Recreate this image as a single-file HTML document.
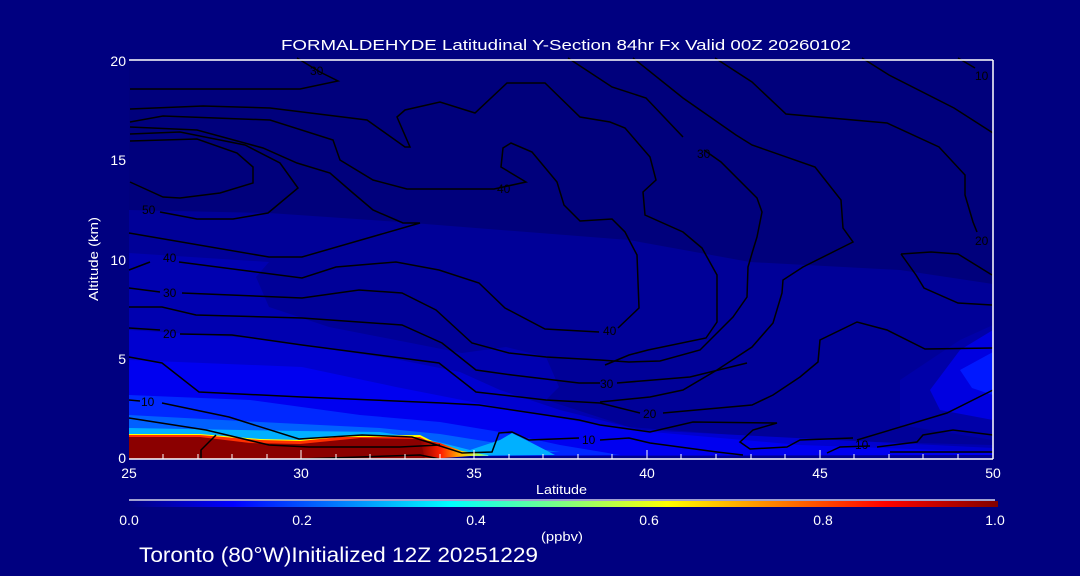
<!DOCTYPE html>
<html><head><meta charset="utf-8"><style>
html,body{margin:0;padding:0;background:#000080;}
body{width:1080px;height:576px;overflow:hidden;position:relative;}
svg{position:absolute;left:0;top:0;}
</style></head><body>
<svg width="1080" height="576" viewBox="0 0 1080 576" xmlns="http://www.w3.org/2000/svg" font-family="Liberation Sans, sans-serif">
<defs>
<linearGradient id="jet" x1="0" x2="1" y1="0" y2="0">
<stop offset="0" stop-color="#000080"/>
<stop offset="0.12" stop-color="#0000ff"/>
<stop offset="0.37" stop-color="#00ffff"/>
<stop offset="0.5" stop-color="#80ff80"/>
<stop offset="0.62" stop-color="#ffff00"/>
<stop offset="0.87" stop-color="#ff0000"/>
<stop offset="1" stop-color="#800000"/>
</linearGradient>
<linearGradient id="edge" x1="0" x2="1" y1="0" y2="0">
<stop offset="0" stop-color="#8b0000"/>
<stop offset="0.3" stop-color="#ff2000"/>
<stop offset="0.6" stop-color="#ffc000"/>
<stop offset="0.85" stop-color="#a0ff60"/>
<stop offset="1" stop-color="#40e0ff"/>
</linearGradient>
</defs>
<rect x="129" y="60" width="864" height="399" fill="#00007c"/>
<polygon fill="#000098" points="129,210 269,213 400,222 629,240 750,262 900,270 993,284 993,459 129,459"/>
<polygon fill="#0000b0" points="129,253 269,262 256,277 269,307 329,327 462,353 506,347 546,357 559,387 546,400 629,427 800,440 993,445 993,459 129,459"/>
<polygon fill="#0000a8" points="900,380 960,340 993,325 993,440 900,425"/>
<polygon fill="#0000d0" points="129,330 250,338 302,345 400,360 460,372 500,390 560,410 640,430 993,448 993,459 129,459"/>
<polygon fill="#0000e0" points="930,390 960,350 993,330 993,420 940,410"/>
<polygon fill="#0018ff" points="960,370 993,352 993,395 972,388"/>
<polygon fill="#0000f0" points="129,360 302,367 396,387 462,400 529,413 629,430 800,445 993,452 993,459 129,459"/>
<polygon fill="#0028ff" points="129,395 250,400 360,415 440,422 500,432 560,445 620,455 129,459"/>
<polygon fill="#0060ff" points="129,415 260,422 380,428 440,434 490,442 560,452 129,459"/>
<polygon fill="#00b0ff" points="129,428 300,431 380,432 430,440 470,450 500,440 512,433 530,442 555,455 129,459"/>
<polygon fill="#ffff00" points="129,434 200,434 260,439 300,440 340,436 420,435 440,445 129,459"/>
<polygon fill="#ff3000" points="129,435 200,435 260,440 300,441 340,437 420,437 440,447 129,459"/>
<polygon fill="#8b0000" points="129,437 200,437 250,443 300,444 360,438 420,439 432,459 129,459"/>
<polygon fill="url(#edge)" points="420,439 440,443 462,451 488,455 490,459 425,459"/>
<polygon fill="#000090" points="430,459 470,456 993,455 993,459"/>
<g fill="none" stroke="#000" stroke-width="1.5">
<polyline points="130,89 300,89 338,81 320,72 297,58"/>
<polyline points="130,109 203,106 270,108 367,120 405,147 410,147 397,117 405,110 440,102 475,113 507,83 545,83 580,117 610,122 625,128 650,157 656,180 643,192 645,215 683,232 702,248 717,275 717,322 706,338 648,350 629,355 605,365"/>
<polyline points="130,122 163,116 270,120 333,140 340,160 373,180 407,189 494,189 526,182 501,167 503,148 511,143 532,152 557,182 564,205 580,221 612,219 625,232 637,255 639,308 618,328"/>
<polyline points="599,332 545,329 505,308 479,283 439,270 396,262 336,267 302,278 179,262"/>
<polyline points="150,262 129,270"/>
<polyline points="130,127 197,130 263,148 297,163 330,173 353,193 373,210 403,223 420,223 302,257 269,257 129,233"/>
<polyline points="130,141 197,139 237,153 253,167 253,183 220,193 180,198 163,197 130,182"/>
<polyline points="160,212 197,219 233,219 268,213 298,188 280,163 245,145 180,132 130,134"/>
<polyline points="129,288 160,292"/><polyline points="182,293 302,298 359,290 402,293 436,310 472,343 509,353 546,357 600,360 629,362 660,361 700,350 733,317 747,297 748,267 753,250 757,237 762,212 757,198 721,162 704,150"/>
<polyline points="683,137 646,98 612,87 568,58"/>
<polyline points="129,307 162,307 196,315 302,318 402,325 442,343 476,370 512,375 579,383 600,383"/>
<polyline points="617,383 690,377 747,363"/>
<polyline points="600,402 650,397 683,390 717,370 752,347 773,323 782,293 783,280 803,267 837,250 853,242 843,228 841,200 815,167 752,145 736,135 683,98 633,58"/>
<polyline points="129,328 160,330"/><polyline points="180,334 232,335 302,345 439,363 476,392 546,400 600,403 640,413"/>
<polyline points="663,413 752,405 773,395 800,377 818,362 820,340 857,322 887,330 925,349 993,348"/>
<polyline points="129,357 162,363 199,392 302,397 442,403 479,405 579,420 600,425 650,432 693,422 777,423 753,430 740,442 750,449 787,447 800,440 853,438"/>
<polyline points="877,447 917,442 923,435 953,430 993,435"/>
<polyline points="129,400 140,401"/><polyline points="162,403 229,417 299,439 362,435 412,437 462,453 492,452 499,433 512,432 529,440 579,438"/>
<polyline points="600,440 629,438 650,443 717,452 743,455"/>
<polyline points="129,418 206,430 269,445 309,447 400,447 440,445"/>
<polyline points="216,435 201,450 201,459"/>
<polyline points="857,440 947,413 993,390"/>
<polyline points="827,453 840,447 870,446"/>
<polyline points="890,452 993,452"/>
<polyline points="715,58 752,82 786,114 887,123 939,147 965,175 965,195 973,222 977,232"/>
<polyline points="862,58 889,75 954,108 993,133"/>
<polyline points="958,58 975,68"/>
<polyline points="901,254 931,252 958,254 992,275"/>
<polyline points="901,254 916,275 924,288 958,303 992,305"/>
<polyline points="300,459 420,455 440,459"/>
</g>
<g font-size="12" fill="#000">
<text x="142" y="214">50</text><text x="163" y="262">40</text><text x="163" y="297">30</text><text x="163" y="338">20</text><text x="141" y="406">10</text>
<text x="497" y="193">40</text><text x="603" y="335">40</text><text x="600" y="388">30</text><text x="643" y="418">20</text><text x="582" y="444">10</text>
<text x="310" y="75">30</text><text x="697" y="158">30</text><text x="975" y="80">10</text><text x="975" y="245">20</text><text x="855" y="449">10</text>
</g>
<g stroke="#fff" stroke-width="1.5" fill="none">
<line x1="129" y1="60" x2="993" y2="60"/>
<line x1="129" y1="459" x2="993" y2="459"/>
<line x1="993" y1="60" x2="993" y2="459"/>
</g>
<g stroke="#fff" stroke-width="1">
<path d="M163,459v-5M198,459v-5M232,459v-5M267,459v-5M301,459v-9M336,459v-5M370,459v-5M405,459v-5M440,459v-5M474,459v-9M509,459v-5M543,459v-5M578,459v-5M612,459v-5M647,459v-9M681,459v-5M716,459v-5M751,459v-5M785,459v-5M820,459v-9M854,459v-5M889,459v-5M923,459v-5M958,459v-5"/>
</g>
<g fill="#fff" font-size="14">
<text x="281" y="50" font-size="15" textLength="570" lengthAdjust="spacingAndGlyphs">FORMALDEHYDE Latitudinal Y-Section 84hr  Fx Valid 00Z 20260102</text>
<text x="126" y="66" text-anchor="end">20</text>
<text x="126" y="165" text-anchor="end">15</text>
<text x="126" y="265" text-anchor="end">10</text>
<text x="126" y="364" text-anchor="end">5</text>
<text x="126" y="463" text-anchor="end">0</text>
<text x="129" y="478" text-anchor="middle">25</text>
<text x="301" y="478" text-anchor="middle">30</text>
<text x="474" y="478" text-anchor="middle">35</text>
<text x="647" y="478" text-anchor="middle">40</text>
<text x="820" y="478" text-anchor="middle">45</text>
<text x="993" y="478" text-anchor="middle">50</text>
<text x="536" y="494" font-size="13" textLength="51" lengthAdjust="spacingAndGlyphs">Latitude</text>
<text transform="translate(98,301) rotate(-90)" font-size="13" textLength="84" lengthAdjust="spacingAndGlyphs">Altitude (km)</text>
<text x="129" y="525" text-anchor="middle">0.0</text>
<text x="302" y="525" text-anchor="middle">0.2</text>
<text x="476" y="525" text-anchor="middle">0.4</text>
<text x="649" y="525" text-anchor="middle">0.6</text>
<text x="823" y="525" text-anchor="middle">0.8</text>
<text x="995" y="525" text-anchor="middle">1.0</text>
<text x="541" y="541" font-size="13" textLength="42" lengthAdjust="spacingAndGlyphs">(ppbv)</text>
<text x="139" y="562" font-size="21" textLength="399" lengthAdjust="spacingAndGlyphs">Toronto (80°W)Initialized 12Z 20251229</text>
</g>
<line x1="129" y1="500" x2="995" y2="500" stroke="#fff" stroke-width="1.2"/>
<rect x="129" y="501" width="869" height="6" fill="url(#jet)"/>
</svg>
</body></html>
